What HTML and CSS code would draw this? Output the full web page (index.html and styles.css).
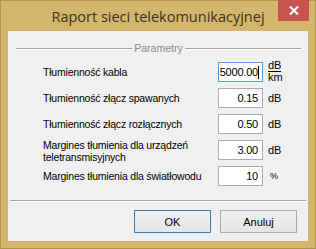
FILE: index.html
```html
<!DOCTYPE html>
<html lang="pl">
<head>
    <meta charset="UTF-8">
    <title>Raport sieci telekomunikacyjnej</title>
    <link rel="stylesheet" href="styles.css">
</head>
<body>
    <div class="window">
        <div class="titlebar">
            <span></span>
            <h1 class="title">Raport sieci telekomunikacyjnej</h1>
            <button class="close" aria-label="Zamknij">
                <svg width="10" height="9" viewBox="0 0 10 9"><path d="M1 0.5 L9 8.5 M9 0.5 L1 8.5" stroke="#fff" stroke-width="2"/></svg>
            </button>
        </div>
        <div class="client">
            <div class="group">
                <div class="group-head"><span class="rule"></span><span class="legend">Parametry</span><span class="rule"></span></div>
                <div class="rows">
                    <label>Tłumienność kabla</label>
                    <div class="field focused">5000.00<span class="caret"></span></div>
                    <div class="unit frac"><span class="num">dB</span><span>km</span></div>

                    <label>Tłumienność złącz spawanych</label>
                    <div class="field">0.15</div>
                    <div class="unit">dB</div>

                    <label>Tłumienność złącz rozłącznych</label>
                    <div class="field">0.50</div>
                    <div class="unit">dB</div>

                    <label class="two-line">Margines tłumienia dla urządzeń<br>teletransmisyjnych</label>
                    <div class="field">3.00</div>
                    <div class="unit">dB</div>

                    <label>Margines tłumienia dla światłowodu</label>
                    <div class="field">10</div>
                    <div class="unit pct">%</div>
                </div>
            </div>
            <div class="separator"></div>
            <div class="buttons">
                <button class="btn default">OK</button>
                <button class="btn">Anuluj</button>
            </div>
        </div>
    </div>
</body>
</html>
```

FILE: styles.css
```css
body {
    margin: 0;
    font-family: 'Liberation Sans', Arial, sans-serif;
    font-size: 10.5px;
    color: #000;
}

.window {
    width: 316px;
    height: 249px;
    box-sizing: border-box;
    background: #d3b66c;
    border: 1px solid #b2954c;
    display: flex;
    flex-direction: column;
}

.titlebar {
    height: 30px;
    display: grid;
    grid-template-columns: 1fr auto 1fr;
    align-items: start;
}

.title {
    margin: 6px 0 0;
    font-family: 'Open Sans', 'Noto Sans', sans-serif;
    font-weight: normal;
    font-size: 14.5px;
    line-height: 20px;
    color: #3a3324;
}

.close {
    justify-self: end;
    margin: -1px 6px 0 0;
    width: 31px;
    height: 21px;
    border: none;
    padding: 0;
    background: #c85450;
    display: flex;
    align-items: center;
    justify-content: center;
}

.client {
    margin: 0 7px 7px;
    flex: 1;
    background: #f0f0f0;
    display: flex;
    flex-direction: column;
    padding: 11px 2px 0;
}

.group {
    margin: 0 5px 0 6px;
}

.group-head {
    display: flex;
    align-items: center;
    height: 12px;
    color: #8a8a8a;
}

.rule {
    flex: 1;
    height: 1px;
    background: #a0a0a0;
    box-shadow: 0 1px 0 #fff;
}

.legend {
    padding: 0 2px;
    line-height: 12px;
}

.rows {
    display: grid;
    grid-template-columns: 175px 45px auto;
    grid-auto-rows: 20px;
    row-gap: 6px;
    align-items: center;
    margin-top: 8px;
    padding-left: 27px;
}

.rows label {
    line-height: 12px;
    white-space: nowrap;
    letter-spacing: -0.2px;
}

.rows .two-line {
    margin-top: 1px;
}

.field {
    height: 20px;
    box-sizing: border-box;
    background: #fff;
    border: 1px solid #abadb3;
    text-align: right;
    padding: 0 4px 0 0;
    line-height: 18px;
    font-size: 11px;
    letter-spacing: -0.2px;
    position: relative;
}

.field.focused {
    border-color: #569de5;
}

.caret {
    position: absolute;
    right: 3px;
    top: 3px;
    width: 1px;
    height: 13px;
    background: #000;
}

.unit {
    padding-left: 5px;
    font-size: 11px;
}

.unit.pct {
    font-size: 9px;
    padding-left: 7px;
}

.frac {
    display: flex;
    flex-direction: column;
    align-items: flex-start;
    line-height: 11px;
    margin-top: -2px;
}

.frac .num {
    border-bottom: 1px solid #000;
}

.separator {
    margin-top: 14px;
    height: 1px;
    background: #a0a0a0;
    box-shadow: 0 1px 0 #fff;
}

.buttons {
    display: flex;
    justify-content: flex-end;
    gap: 9px;
    margin-top: 9px;
    padding-right: 9px;
}

.btn {
    width: 77px;
    height: 23px;
    font-family: 'Liberation Sans', Arial, sans-serif;
    font-size: 11px;
    color: #000;
    border: 1px solid #acacac;
    background: linear-gradient(to bottom, #f0f0f0, #e5e5e5);
    padding: 0;
}

.btn.default {
    border-color: #3c7fb1;
}
```
